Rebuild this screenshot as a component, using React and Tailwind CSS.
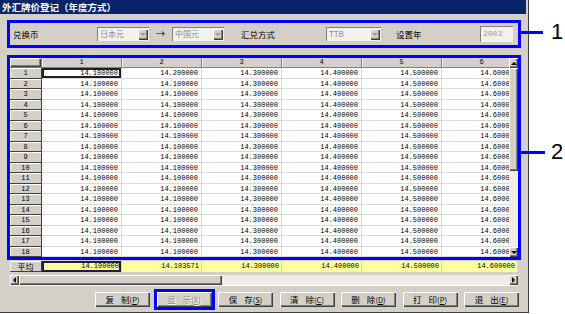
const cjk = "font-['Noto_Sans_CJK_SC','Noto_Sans',sans-serif]";
const mono = "font-['Liberation_Mono','DejaVu_Sans_Mono',monospace]";
const raised = "bg-[#d4d0c8] shadow-[inset_1px_1px_0_#ffffff,inset_-1px_-1px_0_#404040,inset_-2px_-2px_0_#808080]";
const sunken = "border-t border-l border-[#808080] border-b-white border-r-white";

const rows = Array.from({ length: 18 }, (_, i) => [
  "14.100000",
  i === 0 ? "14.200000" : "14.100000",
  "14.300000",
  "14.400000",
  "14.500000",
  "14.600000",
]);
const avg = ["14.100000", "14.103571", "14.300000", "14.400000", "14.500000", "14.600000"];

const Tri = ({ dir = "down", color = "#000" }) => {
  const pts = {
    down: "0,0 6,0 3,3",
    up: "0,3 6,3 3,0",
    left: "3,0 3,6 0,3",
    right: "0,0 0,6 3,3",
  }[dir];
  const w = dir === "left" || dir === "right" ? 3 : 6;
  const h = dir === "left" || dir === "right" ? 6 : 3;
  return (
    <svg width={w} height={h} viewBox={`0 0 ${w} ${h}`}>
      <polygon points={pts} fill={color} />
    </svg>
  );
};

const Combo = ({ text, w }) => (
  <div className={`${w} h-[14px] flex ${sunken} bg-[#f2f1ee]`}>
    <div className={`flex-1 pl-[2px] text-[8px] leading-[12px] text-[#8a8a8a] ${cjk}`}>{text}</div>
    <div className={`w-[10px] m-[1px] flex items-center justify-center ${raised}`}>
      <Tri color="#9a9a9a" />
    </div>
  </div>
);

const Btn = ({ a, b, k, disabled }) => (
  <div
    className={`w-[55px] h-[15px] flex items-center justify-center text-[8.5px] ${cjk} ${raised} ${
      disabled ? "text-[#8c8c8c] [text-shadow:1px_1px_0_#ffffff]" : "text-black"
    }`}
  >
    <span>{a}</span>
    <span className="ml-[7px]">{b}</span>
    <span className="text-[7.5px]">
      (<span className="underline">{k}</span>)
    </span>
  </div>
);

export default function App() {
  return (
    <div className="relative w-[565px] h-[314px] bg-white overflow-hidden">
      <div className="w-[529px] h-[313px] bg-[#d4d0c8] border-r border-b border-[#404040] flex flex-col">
        {/* title */}
        <div className={`h-[14px] mr-[2px] bg-[#0a246a] text-white font-bold text-[9.5px] leading-[14px] pl-[2px] ${cjk}`}>
          外汇牌价登记（年度方式）
        </div>

        {/* top options */}
        <div className={`mt-[6px] ml-[7px] w-[514px] h-[28px] border-[3px] border-[#0000ff] flex items-center text-[8.5px] text-black ${cjk}`}>
          <span className="w-[87px] pl-[3px]">兑换币</span>
          <Combo text="日本元" w="w-[52px]" />
          <span className="w-[23px] text-center text-[9px]">→</span>
          <Combo text="中国元" w="w-[52px]" />
          <span className="ml-[17px] w-[85px]">汇兑方式</span>
          <Combo text="TTB" w="w-[55px]" />
          <span className="ml-[15px] w-[84px]">设置年</span>
          <div className={`w-[33px] h-[16px] ${sunken} bg-[#f2f1ee] pl-[2px] text-[8px] leading-[14px] text-[#9a9a9a] ${mono}`}>
            2003
          </div>
        </div>

        {/* grid */}
        <div className="mt-[7px] ml-[7px] w-[514px] flex flex-col">
          <div className="border-[3px] border-[#0000ff] flex">
            <div className={`w-[499px] overflow-hidden text-[7px] ${mono}`}>
              <div className="flex h-[10px] leading-[9px]">
                <div className={`w-[32px] shrink-0 border-r border-b border-[#808080] ${raised}`} />
                {[1, 2, 3, 4, 5, 6].map((c) => (
                  <div
                    key={c}
                    className="w-[80px] shrink-0 bg-[#d4d0c8] border-r border-b border-[#808080] shadow-[inset_1px_0_0_#ffffff] text-center"
                  >
                    {c}
                  </div>
                ))}
              </div>
              {rows.map((r, i) => (
                <div key={i} className="flex h-[10.5px] leading-[10px]">
                  <div className="w-[32px] shrink-0 bg-[#d4d0c8] border-r border-b border-[#404040] shadow-[inset_1px_1px_0_#ffffff] text-center">
                    {i + 1}
                  </div>
                  {r.map((v, j) => (
                    <div
                      key={j}
                      className={`w-[80px] shrink-0 bg-white border-r border-b border-[#d9d9d9] text-right pr-[3px] ${
                        i === 0 && j === 0 ? "shadow-[inset_0_0_0_2px_#202020]" : ""
                      }`}
                    >
                      {v}
                    </div>
                  ))}
                </div>
              ))}
            </div>
            <div className="w-[9px] flex flex-col">
              <div className={`h-[10px] flex items-center justify-center ${raised}`}>
                <Tri dir="up" />
              </div>
              <div className={`h-[103px] ${raised}`} />
              <div className="flex-1 bg-[#eeede9]" />
              <div className={`h-[10px] flex items-center justify-center ${raised}`}>
                <Tri dir="down" />
              </div>
            </div>
          </div>

          {/* average row */}
          <div className={`mt-[1px] ml-[3px] w-[508px] h-[11px] flex overflow-hidden text-[7px] leading-[11px] ${mono}`}>
            <div className={`w-[32px] shrink-0 border-r border-b border-[#404040] shadow-[inset_1px_1px_0_#ffffff] bg-[#d4d0c8] text-center text-[8px] ${cjk}`}>
              平均
            </div>
            {avg.map((v, j) => (
              <div
                key={j}
                className={`${j === 5 ? "w-[76px]" : "w-[80px]"} shrink-0 bg-[#ffff99] border-r border-[#e0dc90] text-right pr-[2px] ${
                  j === 0 ? "shadow-[inset_0_0_0_2px_#1c1c48]" : ""
                }`}
              >
                {v}
              </div>
            ))}
          </div>

          {/* horizontal scrollbar */}
          <div className="mt-[3px] ml-[3px] w-[508px] h-[10px] flex">
            <div className={`w-[9px] flex items-center justify-center ${raised}`}>
              <Tri dir="left" />
            </div>
            <div className={`w-[203px] ${raised}`} />
            <div className="flex-1 bg-[#eeede9]" />
            <div className={`w-[9px] flex items-center justify-center ${raised}`}>
              <Tri dir="right" />
            </div>
          </div>
          <div className="ml-[3px] w-[508px] h-[1px] bg-white" />
        </div>

        {/* buttons */}
        <div className="mt-[6px] ml-[95px] flex gap-[6.5px]">
          <Btn a="复" b="制" k="P" />
          <div className="relative">
            <Btn a="显" b="示" k="X" disabled />
            <div className="absolute -inset-[3px] border-[3px] border-[#0000ff]" />
          </div>
          <Btn a="保" b="存" k="S" />
          <Btn a="清" b="除" k="C" />
          <Btn a="删" b="除" k="D" />
          <Btn a="打" b="印" k="P" />
          <Btn a="退" b="出" k="E" />
        </div>
      </div>

      {/* callouts */}
      <div className="absolute left-[521px] top-[31px] w-[22px] h-[3px] bg-[#0000ff]" />
      <div className="absolute left-[551px] top-[19px] text-[22px] leading-[26px] text-black font-['Liberation_Sans',sans-serif]">
        1
      </div>
      <div className="absolute left-[521px] top-[151px] w-[24px] h-[3px] bg-[#0000ff]" />
      <div className="absolute left-[551px] top-[139px] text-[22px] leading-[26px] text-black font-['Liberation_Sans',sans-serif]">
        2
      </div>
    </div>
  );
}
